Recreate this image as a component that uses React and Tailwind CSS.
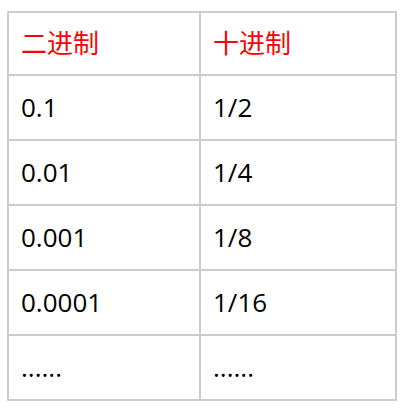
import React from 'react'

const rows = [
  ['0.1', '1/2'],
  ['0.01', '1/4'],
  ['0.001', '1/8'],
  ['0.0001', '1/16'],
  ['......', '......'],
]

const App = () => {
  return (
    <div className="bg-white w-[404px] h-[410px] pt-[11px] pl-[7px]" style={{ fontFamily: '"Open Sans", "Noto Sans CJK SC", sans-serif' }}>
      <table className="border-collapse text-[26px] text-black">
        <thead>
          <tr className="h-[63px]">
            <td className="w-[192px] border-2 border-[#ccc] px-3 text-[#f00]">二进制</td>
            <td className="w-[196px] border-2 border-[#ccc] px-3 text-[#f00]">十进制</td>
          </tr>
        </thead>
        <tbody>
          {rows.map((r, i) => (
            <tr key={i} className="h-[65px]">
              <td className="border-2 border-[#ccc] px-3">{r[0]}</td>
              <td className="border-2 border-[#ccc] px-3">{r[1]}</td>
            </tr>
          ))}
        </tbody>
      </table>
    </div>
  )
}

export default App
